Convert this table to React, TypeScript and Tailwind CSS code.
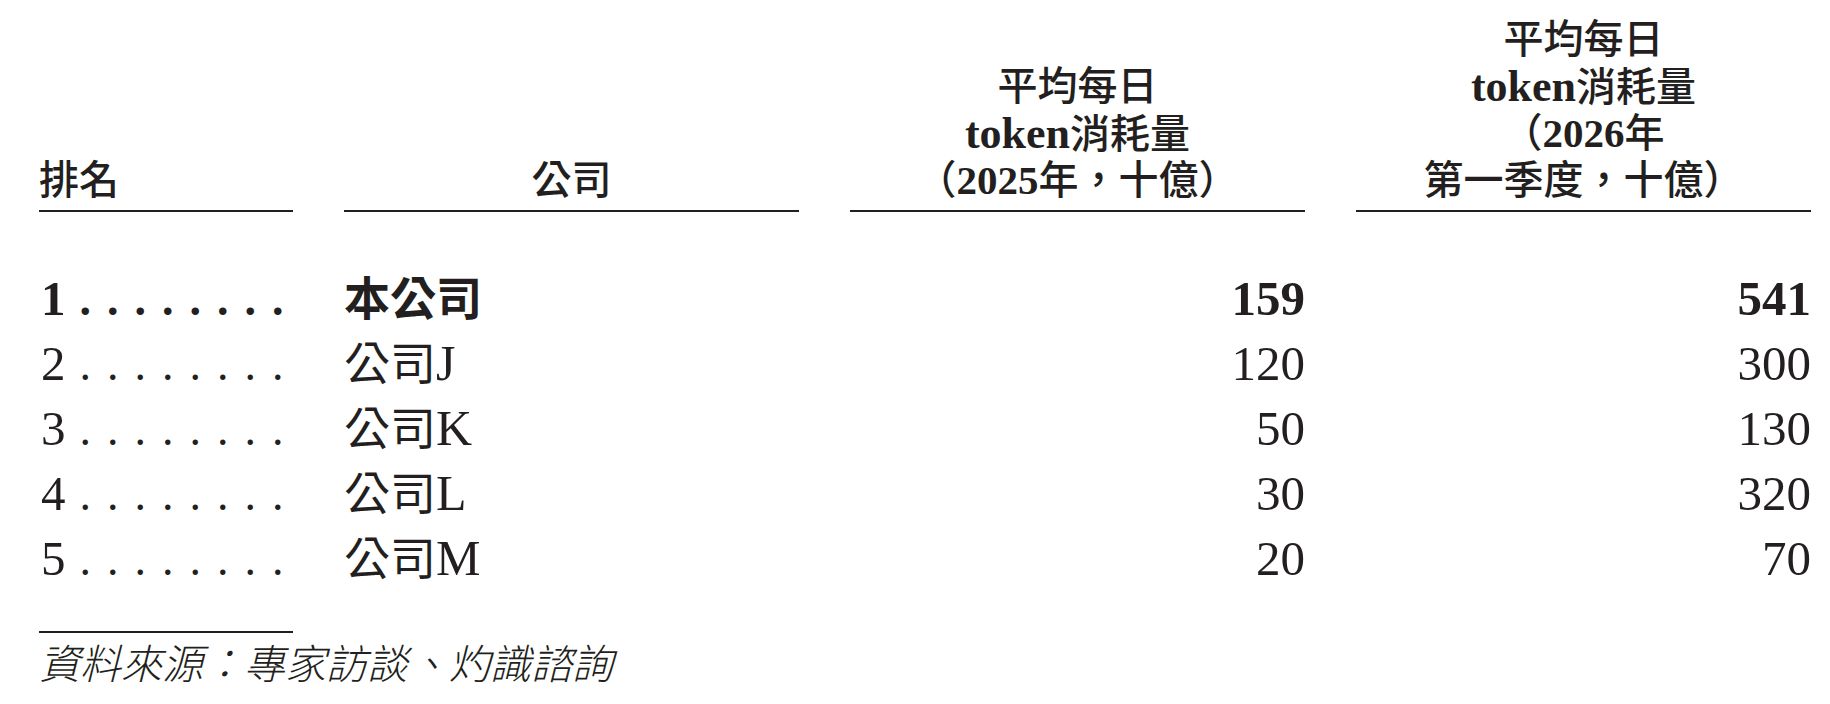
import React from "react";

const FONT = "[font-family:'Liberation_Serif','Noto_Sans_CJK_TC',serif]";

interface IRow {
  rank: number;
  name: string;
  suffix: string;
  y2025: string;
  y2026: string;
  bold?: boolean;
}

const rows: IRow[] = [
  { rank: 1, name: "本公司", suffix: "", y2025: "159", y2026: "541", bold: true },
  { rank: 2, name: "公司", suffix: "J", y2025: "120", y2026: "300" },
  { rank: 3, name: "公司", suffix: "K", y2025: "50", y2026: "130" },
  { rank: 4, name: "公司", suffix: "L", y2025: "30", y2026: "320" },
  { rank: 5, name: "公司", suffix: "M", y2025: "20", y2026: "70" },
];

const cols = "grid grid-cols-[254px_455px_455px_455px] gap-x-[51px]";

const Line: React.FC<{ children: React.ReactNode }> = ({ children }) => (
  <div className="h-[47px] whitespace-nowrap">{children}</div>
);

const Rule: React.FC = () => <div className="h-[2px] bg-[#231f20]" />;

const App: React.FC = () => {
  return (
    <div className={`min-h-screen w-full bg-white text-[#231f20] ${FONT}`}>
      <div className="pl-[39px] pt-[16px]">
        {/* header */}
        <div className={`${cols} items-end text-[40px] leading-[47px] font-medium`}>
          <div>
            <Line>排名</Line>
          </div>
          <div className="text-center">
            <Line>公司</Line>
          </div>
          <div className="text-center">
            <Line>平均每日</Line>
            <Line>
              <span className="text-[44px] font-bold">token</span>消耗量
            </Line>
            <Line>
              （<span className="text-[41px] font-bold">2025</span>年，十億）
            </Line>
          </div>
          <div className="text-center">
            <Line>平均每日</Line>
            <Line>
              <span className="text-[44px] font-bold">token</span>消耗量
            </Line>
            <Line>
              （<span className="text-[41px] font-bold">2026</span>年
            </Line>
            <Line>第一季度，十億）</Line>
          </div>
        </div>
        <div className={`${cols} mt-[6px]`}>
          <Rule />
          <Rule />
          <Rule />
          <Rule />
        </div>

        {/* body */}
        <div className="mt-[54px] text-[46px] leading-[65px]">
          {rows.map((row) => (
            <div
              key={row.rank}
              className={`${cols} h-[65px] items-baseline ${row.bold ? "font-bold" : "font-normal"}`}
            >
              <div className="whitespace-nowrap">
                <span className="ml-[2px] text-[49px]">{row.rank}</span>
                <span className="ml-[14px] tracking-[16px]">........</span>
              </div>
              <div className="whitespace-nowrap">
                {row.name}
                <span className="text-[50px]">{row.suffix}</span>
              </div>
              <div className="text-right text-[49px]">{row.y2025}</div>
              <div className="text-right text-[49px]">{row.y2026}</div>
            </div>
          ))}
        </div>

        {/* footnote */}
        <div className="mt-[40px] w-[254px]">
          <Rule />
        </div>
        <div className="mt-[8px] text-[41px] leading-[48px] italic font-light whitespace-nowrap">
          資料來源：專家訪談、灼識諮詢
        </div>
      </div>
    </div>
  );
};

export default App;
